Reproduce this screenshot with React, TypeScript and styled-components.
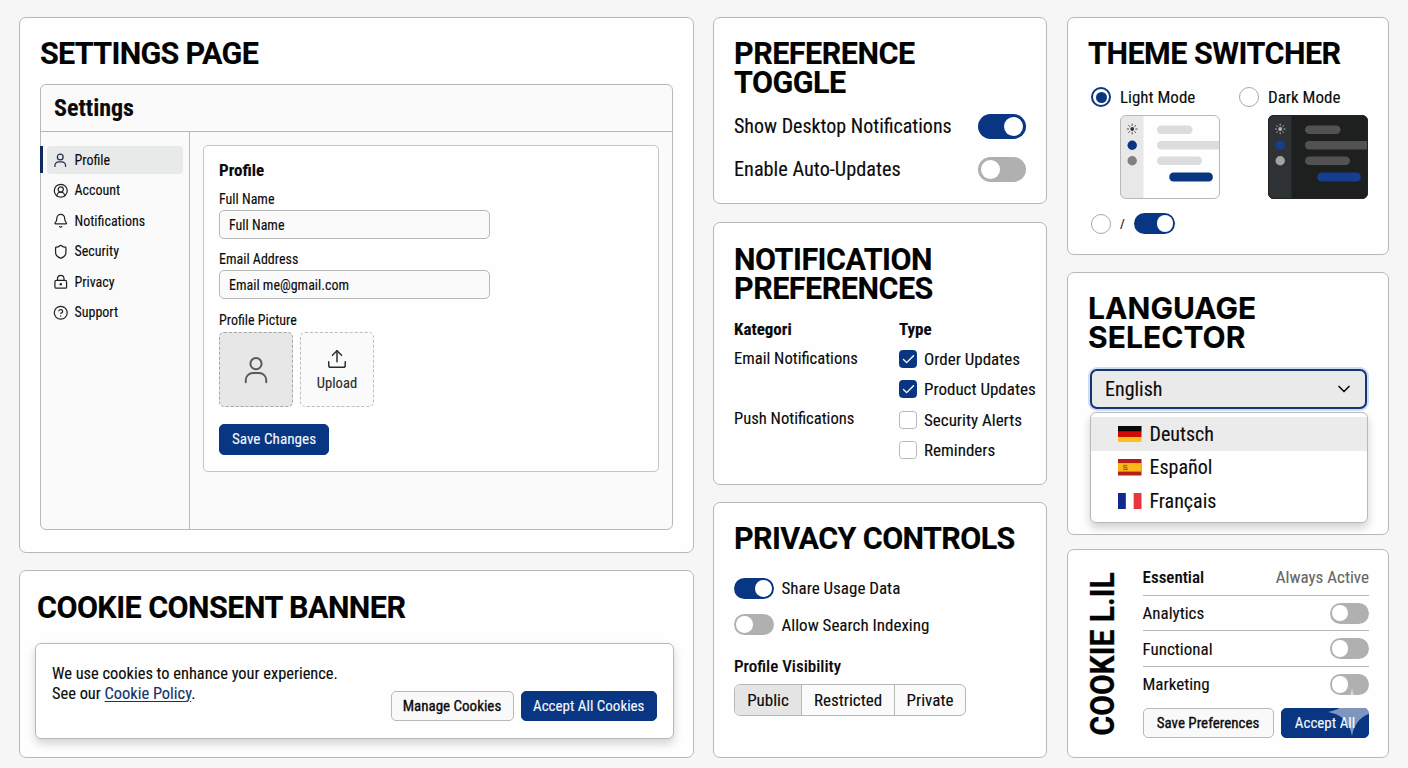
import React from 'react';
import styled, { createGlobalStyle, css } from 'styled-components';
import {
  Bell,
  Check,
  ChevronDown,
  CircleHelp,
  CircleUserRound,
  LockKeyhole,
  Shield,
  Upload,
} from 'lucide-react';

const navy = '#083682';
const line = '#b7b8b8';
const soft = '#fafafa';

const GlobalStyle = createGlobalStyle`
  *, *::before, *::after { box-sizing: border-box; }
  body {
    margin: 0;
    background: #f5f6f5;
    color: #0b0b0b;
    font-family: Roboto, "Liberation Sans", sans-serif;
    font-stretch: 75%;
    -webkit-text-stroke: 0.12px currentColor;
  }
  h2, h3, h4, p, ul { margin: 0; padding: 0; }
  ul { list-style: none; }
  button { font: inherit; color: inherit; font-stretch: 75%; padding: 0; }
`;

const Page = styled.main`
  display: flex;
  align-items: flex-start;
  width: 1408px;
  height: 768px;
  padding: 17px 0 0 19px;
`;

const Column = styled.div<{ $w: number; $gap: number; $right?: number }>`
  display: flex;
  flex: none;
  flex-direction: column;
  width: ${p => p.$w}px;
  margin-right: ${p => p.$right ?? 0}px;
  row-gap: ${p => p.$gap}px;
`;

const Card = styled.section<{ $h: number; $pad?: string; $after?: number }>`
  height: ${p => p.$h}px;
  padding: ${p => p.$pad ?? '21px 20px 0'};
  margin-bottom: ${p => p.$after ?? 0}px;
  border: 1px solid ${line};
  border-radius: 7px;
  background: #fefefe;
`;

const Title = styled.h2<{ $track?: number; $inter?: boolean }>`
  font-family: ${p => (p.$inter ? 'Inter' : 'Roboto')}, sans-serif;
  font-size: ${p => (p.$inter ? 30 : 30.5)}px;
  font-weight: 700;
  font-stretch: 100%;
  line-height: 29px;
  letter-spacing: ${p => p.$track ?? -0.6}px;
  white-space: nowrap;
  color: #030303;
`;

const Label = styled.span<{ $size?: number; $weight?: number; $color?: string; $raise?: boolean }>`
  padding-bottom: ${p => (p.$raise ? 1 : 0)}px;
  font-size: ${p => p.$size ?? 17}px;
  font-weight: ${p => p.$weight ?? 'inherit'};
  color: ${p => p.$color ?? 'inherit'};
  white-space: nowrap;
`;

const Button = styled.button<{ $primary?: boolean; $w: number }>`
  width: ${p => p.$w}px;
  height: 30px;
  flex: none;
  border-radius: 5px;
  font-size: 15px;
  white-space: nowrap;
  ${p =>
    p.$primary
      ? css`background: ${navy}; border: 1px solid ${navy}; color: #f3f6fb;`
      : css`background: #f9f9f9; border: 1px solid ${line}; -webkit-text-stroke: 0.35px currentColor;`}
`;

const Switch = styled.span<{ $on?: boolean; $w?: number; $h?: number }>`
  display: flex;
  flex: none;
  align-items: center;
  justify-content: ${p => (p.$on ? 'flex-end' : 'flex-start')};
  width: ${p => p.$w ?? 39.5}px;
  height: ${p => p.$h ?? 21}px;
  padding: 0 ${p => (p.$h === 25 ? 3 : 2)}px;
  border-radius: 13px;
  background: ${p => (p.$on ? navy : '#b0b0b0')};
  &::before {
    content: '';
    width: ${p => (p.$h ?? 21) - (p.$h === 25 ? 6 : 4.5)}px;
    height: ${p => (p.$h ?? 21) - (p.$h === 25 ? 6 : 4.5)}px;
    border-radius: 50%;
    background: #fff;
  }
`;

/* Settings window */
const Window = styled.div`
  display: flex;
  flex-direction: column;
  width: 633px;
  height: 446px;
  margin-top: 16px;
  border: 1px solid ${line};
  border-radius: 6px;
  background: ${soft};
`;
const WindowHeader = styled.h3`
  height: 47px;
  padding-left: 13px;
  border-bottom: 1px solid ${line};
  font-size: 24px;
  font-weight: 700;
  line-height: 46px;
`;
const WindowBody = styled.div`
  display: flex;
  flex: 1;
`;
const Sidebar = styled.ul`
  width: 149px;
  padding: 14px 6px 0;
  border-right: 1px solid ${line};
`;
const NavItem = styled.li<{ $active?: boolean }>`
  position: relative;
  display: flex;
  align-items: center;
  gap: 7px;
  height: 27.5px;
  margin-bottom: 3px;
  padding-left: 6.5px;
  border-radius: 4px;
  font-size: 14px;
  background: ${p => (p.$active ? '#e8e9e9' : 'transparent')};
  svg { flex: none; color: ${p => (p.$active ? '#23304f' : '#222')}; }
  ${p =>
    p.$active &&
    css`
      &::before {
        content: '';
        position: absolute;
        left: -7px;
        top: 0;
        width: 3px;
        height: 27px;
        background: #0f2b5e;
      }
    `}
`;
const NavText = styled.span`
  padding-bottom: 0.5px;
`;
const IconSlot = styled.span`
  display: flex;
  justify-content: center;
  width: 14px;
`;
const Main = styled.div`
  flex: 1;
  padding: 13px;
`;
const Panel = styled.form`
  display: flex;
  flex-direction: column;
  align-items: flex-start;
  height: 327px;
  padding: 14px 15px 0;
  border: 1px solid #c4c5c5;
  border-radius: 5px;
  background: #fefefe;
`;
const PanelHeading = styled.h4`
  font-size: 17px;
  font-weight: 700;
  line-height: 20px;
`;
const FieldLabel = styled.label<{ $top: number }>`
  margin-top: ${p => p.$top}px;
  font-size: 14px;
  line-height: 16px;
`;
const Field = styled.div`
  width: 271px;
  height: 29px;
  margin-top: 3px;
  padding-left: 9px;
  border: 1px solid ${line};
  border-radius: 5px;
  background: ${soft};
  font-size: 14px;
  line-height: 28px;
`;
const Tiles = styled.div`
  display: flex;
  gap: 7px;
  margin: 4px 0 17px;
`;
const Tile = styled.div<{ $filled?: boolean }>`
  display: flex;
  flex-direction: column;
  align-items: center;
  justify-content: center;
  gap: 4px;
  width: 74px;
  height: 75px;
  border: 1px dashed ${p => (p.$filled ? '#a6a6a6' : '#bdbdbd')};
  border-radius: 5px;
  background: ${p => (p.$filled ? '#e7e7e7' : soft)};
  color: ${p => (p.$filled ? '#5a5a5a' : '#2b2b2b')};
  font-size: 14.6px;
  line-height: 18px;
`;
const SaveButton = styled(Button)`
  height: 30.5px;
  font-size: 15.2px;
`;

/* Cookie banner */
const Banner = styled.div`
  display: flex;
  justify-content: space-between;
  width: 639px;
  height: 96px;
  margin-top: 21px;
  padding: 20px 16.5px 17px 16px;
  border: 1px solid ${line};
  border-radius: 6px;
  background: #fefefe;
  box-shadow: 0 5px 10px rgba(0, 0, 0, 0.17);
`;
const BannerTitle = styled(Title)`
  padding-left: 2px;
`;
const BannerText = styled.p`
  font-size: 16.4px;
  line-height: 19.5px;
  white-space: nowrap;
`;
const Link = styled.a`
  color: #14336b;
  text-decoration: underline;
  text-underline-offset: 2px;
  text-decoration-thickness: 1px;
`;
const Actions = styled.div<{ $top?: number }>`
  display: flex;
  align-items: flex-end;
  gap: 7.5px;
  margin-top: ${p => p.$top ?? 0}px;
`;

/* Rows */
const Rows = styled.div<{ $top: number }>`
  display: flex;
  flex-direction: column;
  margin-top: ${p => p.$top}px;
`;
const Row = styled.div<{ $h: number; $between?: boolean; $ruled?: boolean; $gap?: number }>`
  display: flex;
  align-items: center;
  justify-content: ${p => (p.$between ? 'space-between' : 'flex-start')};
  gap: ${p => p.$gap ?? 0}px;
  height: ${p => p.$h}px;
  border-bottom: ${p => (p.$ruled ? `1px solid ${line}` : 'none')};
`;

/* Notification preferences */
const PrefGrid = styled.div`
  display: grid;
  grid-template-columns: 165px 1fr;
  margin-top: 16px;
`;
const ColumnHead = styled.h3`
  margin-bottom: 5px;
  font-size: 17px;
  font-weight: 700;
  line-height: 20px;
`;
const Category = styled.div`
  height: 59.6px;
  font-size: 16.6px;
  line-height: 29px;
  white-space: nowrap;
`;
const CheckBox = styled.span<{ $on?: boolean }>`
  display: flex;
  align-items: center;
  justify-content: center;
  flex: none;
  width: 18px;
  height: 18px;
  border: 1px solid ${p => (p.$on ? navy : line)};
  border-radius: 3.5px;
  background: ${p => (p.$on ? navy : '#fff')};
  color: #fff;
`;

/* Privacy */
const SubHead = styled.h3`
  margin-top: 13.5px;
  font-size: 17px;
  font-weight: 500;
  line-height: 20px;
`;
const Segments = styled.div`
  display: inline-flex;
  height: 32px;
  margin-top: 8px;
  border: 1px solid ${line};
  border-radius: 6px;
  background: ${soft};
  overflow: hidden;
`;
const Segment = styled.span<{ $w: number; $active?: boolean }>`
  width: ${p => p.$w}px;
  text-align: center;
  font-size: 17px;
  line-height: 30.5px;
  background: ${p => (p.$active ? '#e5e5e5' : 'transparent')};
  & + & { border-left: 1px solid ${line}; }
`;

/* Theme switcher */
const Options = styled.div`
  display: grid;
  grid-template-columns: 148px 140px;
  margin: 19px 0 0 3px;
`;
const Radio = styled.span<{ $on?: boolean }>`
  display: flex;
  flex: none;
  align-items: center;
  justify-content: center;
  width: 20px;
  height: 20px;
  border: ${p => (p.$on ? 2 : 1)}px solid ${p => (p.$on ? navy : '#a9a9a9')};
  border-radius: 50%;
  background: #fff;
  &::before {
    content: '';
    width: 11px;
    height: 11px;
    border-radius: 50%;
    background: ${p => (p.$on ? navy : 'transparent')};
  }
`;
const Thumb = styled.svg`
  display: block;
  margin: 8px 0 0 28.5px;
`;
const MiniRow = styled.div`
  display: flex;
  align-items: center;
  gap: 9px;
  margin: 14px 0 0 3px;
`;

/* Language */
const Select = styled.div`
  display: flex;
  align-items: center;
  justify-content: space-between;
  width: 277px;
  height: 40px;
  margin: 17px 0 0 2px;
  padding: 0 11px 0 13px;
  border: 2px solid #143474;
  border-radius: 7px;
  background: #eaeaea;
  box-shadow: 0 0 0 2px #cfdef3;
`;
const Menu = styled.ul`
  width: 278px;
  height: 111px;
  margin: 3px 0 0 2px;
  padding-top: 4px;
  border: 1px solid ${line};
  border-radius: 6px;
  background: #fff;
  box-shadow: 0 5px 9px rgba(0, 0, 0, 0.18);
`;
const MenuItem = styled.li<{ $active?: boolean }>`
  display: flex;
  align-items: center;
  gap: 8px;
  height: 33.6px;
  padding-left: 27px;
  background: ${p => (p.$active ? '#ebebeb' : 'transparent')};
`;

/* Compact cookie list */
const CompactCard = styled(Card)`
  display: flex;
  justify-content: space-between;
`;
const SideTitle = styled.h2`
  align-self: flex-start;
  width: 32px;
  height: 185px;
  margin: 1px 0 0 18.5px;
  writing-mode: vertical-rl;
  transform: rotate(180deg) scaleY(0.895);
  transform-origin: 50% 50%;
  font-size: 33.5px;
  font-weight: 700;
  font-stretch: 100%;
  line-height: 32px;
  text-align: center;
  white-space: nowrap;
  color: #030303;
  -webkit-text-stroke: 0.3px currentColor;
`;
const CompactList = styled.div`
  width: 226.5px;
`;
const ActionsWithMark = styled(Actions)`
  position: relative;
`;
const Spark = styled.svg`
  position: absolute;
  right: -7px;
  top: -20px;
`;

function PersonIcon({ size, stroke }: { size: number; stroke: number }) {
  return (
    <svg width={size} height={size} viewBox="0 0 24 24" fill="none" stroke="currentColor" strokeWidth={stroke} strokeLinecap="round">
      <circle cx="12" cy="6.6" r="4.8" />
      <path d="M3.2 22.4v-1.6a6.2 6.2 0 0 1 6.2-6.2h5.2a6.2 6.2 0 0 1 6.2 6.2v1.6" />
    </svg>
  );
}

type ThumbColors = { frame: string; bg: string; side: string; bar: string; accent: string; dot: string; sun: string };
const light: ThumbColors = { frame: '#b9b9b9', bg: '#fefefe', side: '#e8e8e8', bar: '#dcdcdc', accent: '#0a3580', dot: '#808080', sun: '#333' };
const dark: ThumbColors = { frame: '#222324', bg: '#1e1f1f', side: '#2f3235', bar: '#525252', accent: '#153e8f', dot: '#a3a3a3', sun: '#b5b5b5' };

function ThemeThumb({ c, id }: { c: ThumbColors; id: string }) {
  return (
    <Thumb width="100" height="84" viewBox="0 0 100 84">
      <clipPath id={id}><rect width="100" height="84" rx="6" /></clipPath>
      <g clipPath={`url(#${id})`}>
        <rect width="100" height="84" fill={c.bg} />
        <rect width="23.5" height="84" fill={c.side} />
        <rect x="37" y="10.6" width="35.5" height="8.5" rx="4.2" fill={c.bar} />
        <rect x="37" y="26" width="70" height="8.5" rx="4.2" fill={c.bar} />
        <rect x="37" y="41.6" width="45" height="8.5" rx="4.2" fill={c.bar} />
        <rect x="49.3" y="57.6" width="43.5" height="9" rx="4.2" fill={c.accent} />
      </g>
      <circle cx="12.2" cy="30.2" r="4.7" fill={c.accent} />
      <circle cx="12.2" cy="45.8" r="4.7" fill={c.dot} />
      <circle cx="12.2" cy="14" r="1.9" fill={c.sun} />
      <g stroke={c.sun} strokeWidth="0.9" strokeLinecap="round">
        {[0, 45, 90, 135, 180, 225, 270, 315].map(a => (
          <path key={a} d="M12.2 10.4v-1.3" transform={`rotate(${a} 12.2 14)`} />
        ))}
      </g>
      <rect x="0.5" y="0.5" width="99" height="83" rx="5.5" fill="none" stroke={c.frame} />
    </Thumb>
  );
}

function Flag({ code }: { code: 'de' | 'es' | 'fr' }) {
  return (
    <svg width="23.5" height="16.5" viewBox="0 0 24 17" preserveAspectRatio="none">
      {code === 'de' && (
        <>
          <rect width="24" height="6" fill="#080606" />
          <rect y="5.7" width="24" height="5.7" fill="#d20a05" />
          <rect y="11.3" width="24" height="5.7" fill="#fbc21c" />
        </>
      )}
      {code === 'es' && (
        <>
          <rect width="24" height="17" fill="#b51f17" />
          <rect y="4.2" width="24" height="8.8" fill="#fbb61a" />
          <path d="M5.6 6.6h3.8M6 8.6h3.2M5.4 10.9h4.4M6 6.6v2M9.1 8.6v2.2M6 9.6v1.2" stroke="#7d5420" strokeWidth="0.9" fill="none" />
        </>
      )}
      {code === 'fr' && (
        <>
          <rect width="24" height="17" fill="#fff" />
          <rect width="8" height="17" fill="#10298a" />
          <rect x="16" width="8" height="17" fill="#e8363c" />
        </>
      )}
    </svg>
  );
}

const navIcon = { size: 15.5, strokeWidth: 1.9 };
const navItems = [
  { label: 'Profile', icon: <PersonIcon size={14.5} stroke={2.1} />, active: true },
  { label: 'Account', icon: <CircleUserRound {...navIcon} /> },
  { label: 'Notifications', icon: <Bell {...navIcon} /> },
  { label: 'Security', icon: <Shield {...navIcon} /> },
  { label: 'Privacy', icon: <LockKeyhole {...navIcon} /> },
  { label: 'Support', icon: <CircleHelp {...navIcon} /> },
];

const types = [
  { label: 'Order Updates', on: true },
  { label: 'Product Updates', on: true },
  { label: 'Security Alerts', on: false },
  { label: 'Reminders', on: false },
];

const languages = [
  { code: 'de' as const, name: 'Deutsch', active: true },
  { code: 'es' as const, name: 'Español' },
  { code: 'fr' as const, name: 'Français' },
];

export default function App() {
  return (
    <>
      <GlobalStyle />
      <Page>
        <Column $w={675} $gap={17} $right={19}>
          <Card $h={536}>
            <Title $track={-0.7}>SETTINGS PAGE</Title>
            <Window>
              <WindowHeader>Settings</WindowHeader>
              <WindowBody>
                <Sidebar>
                  {navItems.map(n => (
                    <NavItem key={n.label} $active={n.active}>
                      <IconSlot>{n.icon}</IconSlot>
                      <NavText>{n.label}</NavText>
                    </NavItem>
                  ))}
                </Sidebar>
                <Main>
                  <Panel>
                    <PanelHeading>Profile</PanelHeading>
                    <FieldLabel $top={11}>Full Name</FieldLabel>
                    <Field>Full Name</Field>
                    <FieldLabel $top={12}>Email Address</FieldLabel>
                    <Field>Email me@gmail.com</Field>
                    <FieldLabel $top={13}>Profile Picture</FieldLabel>
                    <Tiles>
                      <Tile $filled>
                        <PersonIcon size={28} stroke={1.7} />
                      </Tile>
                      <Tile>
                        <Upload size={22} strokeWidth={1.6} />
                        Upload
                      </Tile>
                    </Tiles>
                    <SaveButton type="button" $primary $w={110}>Save Changes</SaveButton>
                  </Panel>
                </Main>
              </WindowBody>
            </Window>
          </Card>
          <Card $h={188} $pad="22px 15px 0">
            <BannerTitle $track={-0.55}>COOKIE CONSENT BANNER</BannerTitle>
            <Banner>
              <BannerText>
                We use cookies to enhance your experience.
                <br />
                See our <Link>Cookie Policy</Link>.
              </BannerText>
              <Actions>
                <Button $w={123}>Manage Cookies</Button>
                <Button $primary $w={135.5}>Accept All Cookies</Button>
              </Actions>
            </Banner>
          </Card>
        </Column>

        <Column $w={334} $gap={17} $right={20}>
          <Card $h={187} $after={1}>
            <Title $track={-0.5}>PREFERENCE<br />TOGGLE</Title>
            <Rows $top={8}>
              <Row $h={43} $between>
                <Label $raise $size={20}>Show Desktop Notifications</Label>
                <Switch $on $w={48} $h={25} />
              </Row>
              <Row $h={43} $between>
                <Label $raise $size={20.3}>Enable Auto-Updates</Label>
                <Switch $w={48} $h={25} />
              </Row>
            </Rows>
          </Card>
          <Card $h={263} $pad="22px 0 0 20px">
            <Title $track={-0.5}>NOTIFICATION<br />PREFERENCES</Title>
            <PrefGrid>
              <div>
                <ColumnHead>Kategori</ColumnHead>
                <Category>Email Notifications</Category>
                <Category>Push Notifications</Category>
              </div>
              <div>
                <ColumnHead>Type</ColumnHead>
                {types.map(t => (
                  <Row key={t.label} $h={30.3} $gap={7}>
                    <CheckBox $on={t.on}>{t.on && <Check size={15} strokeWidth={2.2} />}</CheckBox>
                    <Label>{t.label}</Label>
                  </Row>
                ))}
              </div>
            </PrefGrid>
          </Card>
          <Card $h={256}>
            <Title>PRIVACY CONTROLS</Title>
            <Rows $top={17.5}>
              <Row $h={36} $gap={8}>
                <Switch $on />
                <Label $raise>Share Usage Data</Label>
              </Row>
              <Row $h={36} $gap={8}>
                <Switch />
                <Label>Allow Search Indexing</Label>
              </Row>
            </Rows>
            <SubHead>Profile Visibility</SubHead>
            <Segments>
              <Segment $w={66} $active>Public</Segment>
              <Segment $w={93}>Restricted</Segment>
              <Segment $w={71}>Private</Segment>
            </Segments>
          </Card>
        </Column>

        <Column $w={322} $gap={14}>
          <Card $h={238} $after={3}>
            <Title $track={-0.5}>THEME SWITCHER</Title>
            <Options>
              <div>
                <Row $h={20} $gap={9}>
                  <Radio $on />
                  <Label $raise>Light Mode</Label>
                </Row>
                <ThemeThumb c={light} id="thumb-light" />
              </div>
              <div>
                <Row $h={20} $gap={9}>
                  <Radio />
                  <Label $raise>Dark Mode</Label>
                </Row>
                <ThemeThumb c={dark} id="thumb-dark" />
              </div>
            </Options>
            <MiniRow>
              <Radio />
              <Label $raise $size={13}>/</Label>
              <Switch $on $w={41.5} />
            </MiniRow>
          </Card>
          <Card $h={263}>
            <Title $inter $track={0.05}>LANGUAGE<br />SELECTOR</Title>
            <Select>
              <Label $size={20}>English</Label>
              <ChevronDown size={20} strokeWidth={2} />
            </Select>
            <Menu>
              {languages.map(l => (
                <MenuItem key={l.code} $active={l.active}>
                  <Flag code={l.code} />
                  <Label $size={20}>{l.name}</Label>
                </MenuItem>
              ))}
            </Menu>
          </Card>
          <CompactCard $h={209} $pad="10px 19px 0 0">
            <SideTitle>COOKIE L.IL</SideTitle>
            <CompactList>
              <Row $h={36} $between $ruled>
                <Label $raise $weight={500}>Essential</Label>
                <Label $raise $color="#666">Always Active</Label>
              </Row>
              <Row $h={35} $between $ruled>
                <Label>Analytics</Label>
                <Switch />
              </Row>
              <Row $h={36} $between $ruled>
                <Label>Functional</Label>
                <Switch />
              </Row>
              <Row $h={35} $between>
                <Label $raise>Marketing</Label>
                <Switch />
              </Row>
              <ActionsWithMark $top={6}>
                <Button $w={131}>Save Preferences</Button>
                <Button $primary $w={88}>Accept All</Button>
                <Spark width="48" height="48" viewBox="0 0 48 48">
                  <path d="M24 0C26.5 14 34 21.5 48 24C34 26.5 26.5 34 24 48C21.5 34 14 26.5 0 24C14 21.5 21.5 14 24 0Z" fill="#fff" fillOpacity="0.48" />
                </Spark>
              </ActionsWithMark>
            </CompactList>
          </CompactCard>
        </Column>
      </Page>
    </>
  );
}
